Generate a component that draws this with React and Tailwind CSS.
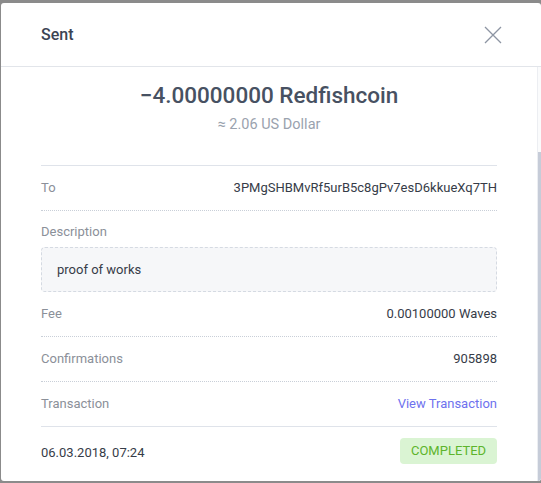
export default function App() {
  const font = { fontFamily: "Roboto, 'Noto Sans', sans-serif" };
  return (
    <div className="w-[541px] h-[483px] bg-[#8b8b8b] pt-[3px] pl-[1px] overflow-hidden" style={font}>
      <div className="w-[540px] h-[478px] bg-white rounded-[3px] flex flex-col overflow-hidden">
        <div className="h-[64px] shrink-0 border-b border-[#e2e5ea] flex items-center justify-between pl-[40px] pr-[40px] pt-[1px]">
          <div className="text-[16px] font-medium text-[#3b4453]">Sent</div>
          <svg width="18" height="18" viewBox="0 0 18 18" className="mr-[-1px]">
            <path d="M1 1 L17 17 M17 1 L1 17" stroke="#8d95a3" strokeWidth="1.3" fill="none" />
          </svg>
        </div>
        <div className="flex flex-1 min-h-0">
          <div className="flex-1 px-[40px]">
            <div className="mt-[14px] h-[28px] leading-[28px] text-center text-[22.5px] font-medium text-[#475162]">
              −4.00000000 Redfishcoin
            </div>
            <div className="mt-[6px] h-[20px] leading-[20px] text-center text-[14.5px] text-[#9aa2ae]">
              ≈ 2.06 US Dollar
            </div>
            <div className="mt-[30px] border-t border-[#dfe3ea]" />
            <div className="h-[45px] flex items-center justify-between text-[13px] border-b border-dotted border-[#c9cfd8]">
              <span className="text-[#8b9099]">To</span>
              <span className="text-[#363c48]">3PMgSHBMvRf5urB5c8gPv7esD6kkueXq7TH</span>
            </div>
            <div className="pt-[11px] text-[13px]">
              <div className="h-[20px] leading-[20px] text-[#8b9099]">Description</div>
              <div className="mt-[5px] h-[45px] rounded-[4px] border border-dashed border-[#d5dae2] bg-[#f6f7f9] flex items-center pl-[15px] text-[#363c48]">
                proof of works
              </div>
            </div>
            <div className="h-[45px] flex items-center justify-between text-[13px] border-b border-dotted border-[#c9cfd8]">
              <span className="text-[#8b9099]">Fee</span>
              <span className="text-[#363c48]">0.00100000 Waves</span>
            </div>
            <div className="h-[45px] flex items-center justify-between text-[13px] border-b border-dotted border-[#c9cfd8]">
              <span className="text-[#8b9099]">Confirmations</span>
              <span className="text-[#363c48]">905898</span>
            </div>
            <div className="h-[45px] flex items-center justify-between text-[13px] border-b border-[#dfe3ea]">
              <span className="text-[#8b9099]">Transaction</span>
              <span className="text-[#6e72ee]">View Transaction</span>
            </div>
            <div className="h-[54px] flex items-center justify-between text-[13px]">
              <span className="text-[#363c48] mt-[-3px]">06.03.2018, 07:24</span>
              <span className="h-[26px] w-[97px] mt-[-6px] rounded-[4px] bg-[#daf4d3] text-[#5db42c] flex items-center justify-center">
                COMPLETED
              </span>
            </div>
          </div>
          <div className="w-[4px] shrink-0 border-l border-[#eceef2] bg-[#fafbfc] flex flex-col">
            <div className="h-[85px]" />
            <div className="flex-1 bg-[#c6ccd8]" />
          </div>
        </div>
      </div>
    </div>
  );
}
